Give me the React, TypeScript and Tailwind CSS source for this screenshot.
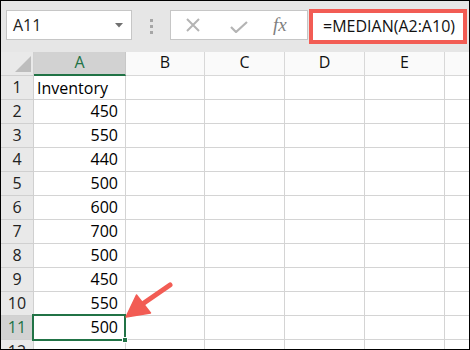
const rows: (string | number)[] = ["Inventory", 450, 550, 440, 500, 600, 700, 500, 450, 550, 500];
const cols = ["B", "C", "D", "E"];
const colW = ["w-[79px]", "w-[80px]", "w-[80px]", "w-[80px]"];

function CellRow({ num, value }: { num: number; value?: string | number }) {
  const selected = num === 11;
  return (
    <div className="flex h-[24px] shrink-0">
      <div
        className={`w-[33px] shrink-0 border-r border-b border-[#d0d0d0] text-center leading-[23px] ${
          selected ? "bg-[#d2d2d2] text-[#217346]" : "bg-[#e9e9e9] text-[#222]"
        }`}
      >
        {num}
      </div>
      <div
        className={`w-[92px] shrink-0 border-r border-b border-[#d4d4d4] bg-white leading-[23px] text-black ${
          typeof value === "number" ? "text-right pr-[7px]" : "pl-[3px] pt-[1px]"
        }`}
      >
        {value}
      </div>
      {cols.map((c, i) => (
        <div key={c} className={`${colW[i]} shrink-0 border-r border-b border-[#d4d4d4] bg-white`} />
      ))}
      <div className="flex-1 border-b border-[#d4d4d4] bg-white" />
    </div>
  );
}

export default function App() {
  return (
    <div className="relative w-[470px] h-[350px] overflow-hidden border border-black bg-white font-['Open_Sans',sans-serif] text-[16px]">
      {/* formula bar */}
      <div className="flex items-start h-[51px] bg-[#e6e6e6]">
        <div className="ml-[5px] mt-[9px] flex items-center justify-between w-[126px] h-[30px] border border-[#c6c6c6] bg-white pl-[6px] pr-[8px]">
          <span className="leading-[28px] text-[#222]">A11</span>
          <svg width="8" height="5" viewBox="0 0 8 5">
            <polygon points="0,0 8,0 4,4.5" fill="#707070" />
          </svg>
        </div>
        <div className="ml-[18px] mt-[18px] flex flex-col gap-[3px]">
          <span className="w-[3px] h-[3px] bg-[#a6a6a6]" />
          <span className="w-[3px] h-[3px] bg-[#a6a6a6]" />
          <span className="w-[3px] h-[3px] bg-[#a6a6a6]" />
        </div>
        <div className="ml-[17px] mt-[9px] flex items-center w-[138px] h-[30px] border border-[#c6c6c6] bg-white">
          <svg className="ml-[14px]" width="16" height="16" viewBox="0 0 16 16">
            <path d="M2 2 L14 14 M14 2 L2 14" stroke="#b4b4b4" strokeWidth="2" fill="none" />
          </svg>
          <svg className="ml-[29px] mt-[3px]" width="18" height="12" viewBox="0 0 18 12">
            <path d="M1 6 L6 11 L17 1" stroke="#b4b4b4" strokeWidth="2.2" fill="none" />
          </svg>
          <span className="ml-[25px] font-['Liberation_Serif',serif] italic text-[19px] leading-[28px] text-[#7f7f7f]">
            fx
          </span>
        </div>
        <div className="ml-[1px] mt-[8px] w-[158px] h-[35px] border-[4px] border-[#f25c54] bg-white pl-[10px] leading-[27px] text-[#111]">
          =MEDIAN(A2:A10)
        </div>
      </div>

      {/* column headers */}
      <div className="flex h-[24px]">
        <div className="relative w-[33px] shrink-0 border-r border-b border-[#d0d0d0] bg-[#e9e9e9]">
          <svg className="absolute left-[14px] top-[4px]" width="16" height="16" viewBox="0 0 16 16">
            <polygon points="16,0 16,16 0,16" fill="#bdbdbd" />
          </svg>
        </div>
        <div className="w-[92px] shrink-0 border-r border-[#c8c8c8] border-b-2 border-b-[#217346] bg-[#d2d2d2] text-center leading-[21px] text-[#217346]">
          A
        </div>
        {cols.map((c, i) => (
          <div
            key={c}
            className={`${colW[i]} shrink-0 border-r border-b border-[#d8d8d8] bg-[#fafafa] text-center leading-[21px] text-[#111]`}
          >
            {c}
          </div>
        ))}
        <div className="flex-1 border-b border-[#d8d8d8] bg-[#fafafa]" />
      </div>

      {/* rows */}
      {rows.map((v, i) => (
        <CellRow key={i} num={i + 1} value={v} />
      ))}
      <CellRow num={12} />

      {/* active cell */}
      <div className="absolute left-[31px] top-[313px] w-[94px] h-[27px] border-2 border-[#217346]" />
      <div className="absolute left-[121px] top-[336px] w-[6px] h-[6px] bg-[#217346] border border-white" />

      {/* arrow */}
      <svg className="absolute left-0 top-0" width="470" height="350" viewBox="0 0 470 350">
        <line x1="169" y1="284" x2="140" y2="304" stroke="#f25c54" strokeWidth="5" strokeLinecap="round" />
        <polygon points="125,316 135.5,294 149.5,312" fill="#f25c54" strokeLinejoin="round" stroke="#f25c54" strokeWidth="1.5" />
      </svg>
    </div>
  );
}
